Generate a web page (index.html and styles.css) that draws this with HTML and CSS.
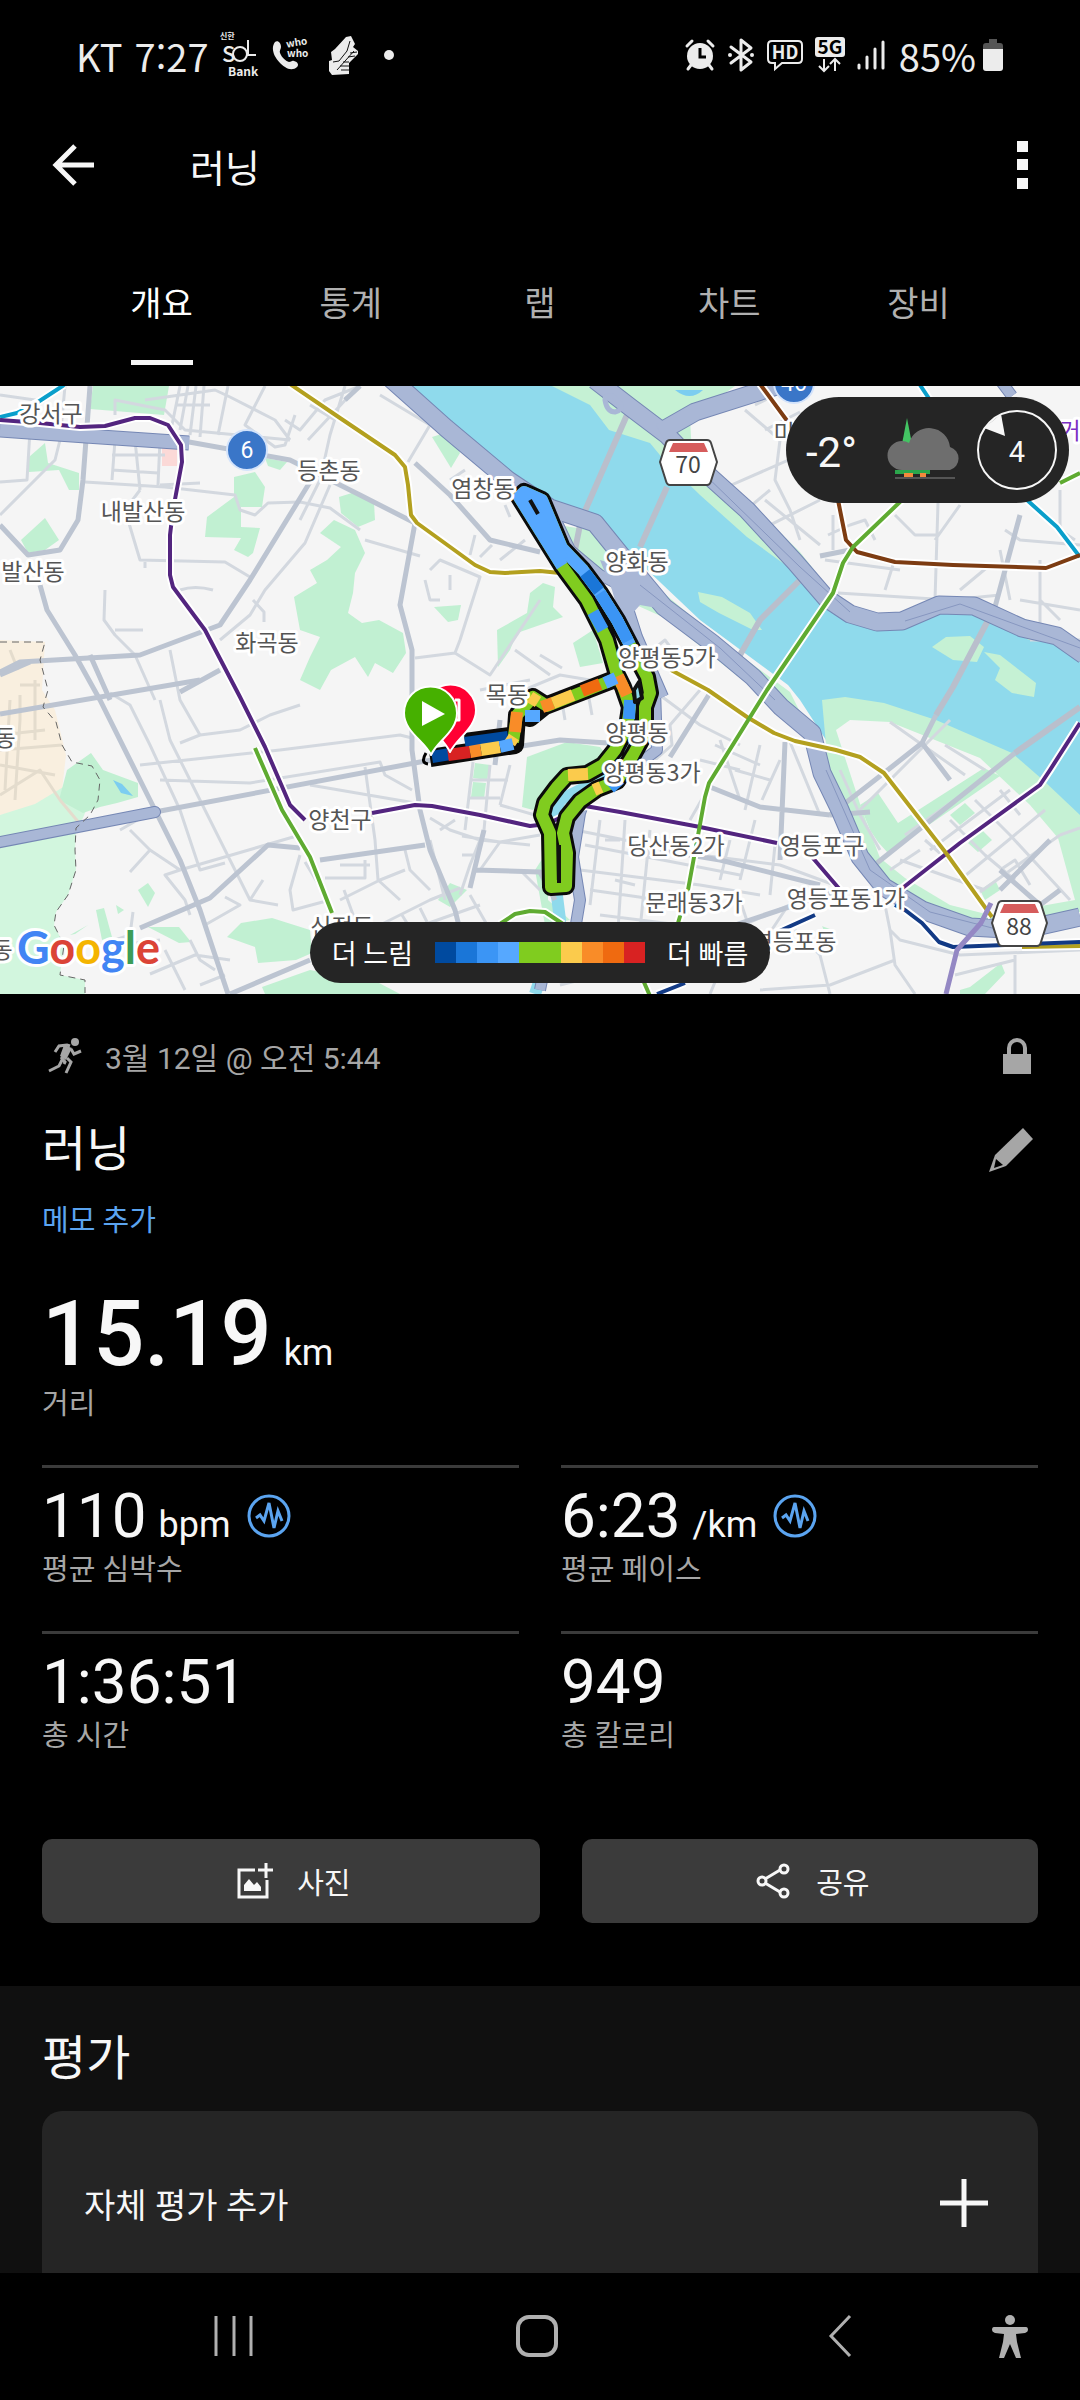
FILE: index.html
```html
<!DOCTYPE html>
<html lang="ko">
<head>
    <meta charset="UTF-8">
    <meta name="viewport" content="width=device-width, initial-scale=1">
    <title>러닝</title>
    <link rel="stylesheet" href="styles.css">
</head>

<body>

<div class="status-bar">
    <div class="status-left">
        <span class="carrier">KT</span>
        <span class="clock">7:27</span>
        <svg class="icon-sol" width="40" height="48" viewBox="0 0 40 48">
            <text x="0" y="8" font-size="8" font-weight="bold">신한</text>
            <text x="2" y="31" font-size="22" font-weight="500">S</text>
            <circle cx="20" cy="23" r="7" fill="none" stroke="#ececec" stroke-width="2"/>
            <path d="M28 9v15h8" fill="none" stroke="#ececec" stroke-width="2"/>
            <text x="8" y="45" font-size="12" font-weight="bold">Bank</text>
        </svg>
        <svg width="40" height="40" viewBox="0 0 40 40">
            <path d="M3 7C6 5 9 8 9 12c0 2-2 4-1 6 2 5 6 8 9 9 2 0 3-2 5-1 4 1 5 4 3 6-3 3-8 3-12 0C5 27-3 15 3 7z" fill="#ececec"/>
            <text x="15" y="13" font-size="10" font-weight="bold" transform="rotate(-10 14 14)">who</text>
            <text x="15" y="22" font-size="10" font-weight="bold">who</text>
        </svg>
        <svg class="icon-shoe" width="32" height="40" viewBox="0 0 32 40">
            <path d="M18 2l5-1 4 8-2 3 5 4v3l-9 9v11l-17 1-3-4V26l3-1-1-8 4-3z" fill="#ececec"/>
            <path d="M9 35l17-19M5 27l6-1 8-10 3-10M12 31h9M15 27h6M20 22l7-1M22 18l7-1M13 35h8" fill="none" stroke="#111" stroke-width="1"/>
        </svg>
        <span class="more-dot"></span>
    </div>
    <div class="status-right">
        <svg width="30" height="32" viewBox="0 0 30 32">
            <circle cx="15" cy="17" r="13" fill="#ececec"/>
            <path d="M2 7l5-5M28 7l-5-5M6 26l-3 4M24 26l3 4" stroke="#ececec" stroke-width="3" stroke-linecap="round"/>
            <path d="M15 9v9h6" fill="none" stroke="#000" stroke-width="3"/>
        </svg>
        <svg class="icon-bluetooth" width="28" height="34" viewBox="0 0 28 34">
            <path d="M4 9l20 15-10 8V2l10 8L4 25" fill="none" stroke="#ececec" stroke-width="3" stroke-linejoin="round" stroke-linecap="round"/>
            <circle cx="3" cy="17" r="2" fill="#ececec"/><circle cx="25" cy="17" r="2" fill="#ececec"/>
        </svg>
        <svg width="36" height="32" viewBox="0 0 36 32">
            <path d="M5 2h26q4 0 4 4v14q0 4-4 4H15l-7 6v-6H5q-4 0-4-4V6q0-4 4-4z" fill="none" stroke="#ececec" stroke-width="2"/>
            <text x="18" y="20" font-size="18" font-weight="bold" text-anchor="middle">HD</text>
        </svg>
        <svg width="30" height="36" viewBox="0 0 30 36">
            <rect width="30" height="20" rx="3" fill="#ececec"/>
            <text class="dark" x="15" y="17" font-size="19" font-weight="bold" text-anchor="middle">5G</text>
            <path d="M9 22v12M4 29l5 5 5-5M20 34V22M15 27l5-5 5 5" fill="none" stroke="#ececec" stroke-width="2"/>
        </svg>
        <svg class="icon-signal" width="28" height="30" viewBox="0 0 28 30">
            <path d="M2 25v3M10 17v11M18 9v19M26 2v26" stroke="#ececec" stroke-width="3" stroke-linecap="round"/>
        </svg>
        <span class="battery">85%</span>
        <svg width="22" height="34" viewBox="0 0 22 34">
            <path d="M7 1h8v4h3q3 0 3 3v4H1V8q0-3 3-3h3z" fill="#555"/>
            <path d="M1 11h20v19q0 3-3 3H4q-3 0-3-3z" fill="#ececec"/>
        </svg>
    </div>
</div>

<header class="app-bar">
    <button class="icon-button back" aria-label="뒤로">
        <svg width="42" height="42" viewBox="0 0 42 42">
            <path d="M23 2L4 21l19 19M4 21h38" fill="none" stroke="#f7f7f7" stroke-width="5"/>
        </svg>
    </button>
    <h1>러닝</h1>
    <button class="icon-button" aria-label="메뉴">
        <svg width="11" height="48" viewBox="0 0 11 48">
            <path d="M0 0h11v11H0zM0 18h11v11H0zM0 37h11v11H0z" fill="#f7f7f7"/>
        </svg>
    </button>
</header>

<nav class="tabs">
    <a class="tab active" href="#overview">개요</a>
    <a class="tab" href="#stats">통계</a>
    <a class="tab" href="#laps">랩</a>
    <a class="tab" href="#charts">차트</a>
    <a class="tab" href="#gear">장비</a>
</nav>

<div class="map">
    <svg class="map-canvas" viewBox="0 386 1080 608">
        <rect y="386" width="1080" height="608" fill="#f5f5f5"/>

        <!-- areas -->
        <path d="M0 640L45 642 42 690 55 710 66 755 62 790 20 812 0 815z" fill="#f9efdf"/>
        <path d="M0 815L35 804 65 786 90 800 83 818 76 828 75 850 76 870 68 895 56 912 54 925 64 945 60 975 85 980 85 994H0z" fill="#d2f6de"/>
        <path d="M162 446h15v20h-15z" fill="#fbd9d7"/>
        <path d="M1070 394h10v20h-18z" fill="#fbd9d7"/>
        <g fill="#c1f0d2">
            <path d="M93 386H169L164 415 90 409z"/>
            <path d="M234 477L255 472 265 487 262 507 241 507 241 527 260 528 253 553 248 557 234 550 241 538 205 537 207 517 234 497z"/>
            <path d="M339 497L355 492 374 503 375 520 358 527 341 513z"/>
            <path d="M320 533L334 520 355 530 365 553 355 573 353 593 348 613 362 623 379 620 403 633 406 653 393 673 375 663 368 677 355 657 331 670 320 690 300 680 310 657 320 637 300 630 294 597 317 583 310 570 327 560 341 547z"/>
            <path d="M21 540L45 518 59 540 45 550 28 553z"/>
            <path d="M29 457L45 443 48 463 79 473 79 490 69 490 59 470 29 472z"/>
            <path d="M432 437L448 432 460 453 451 468z"/>
            <path d="M265 458L287 462 280 470 268 466z"/>
            <path d="M434 607L461 605 458 620 448 622z"/>
            <path d="M497 630L527 613 530 593 543 583 555 587 553 607 563 617 517 633 510 650 498 667z"/>
            <path d="M573 643L593 630 603 663 580 667z"/>
            <path d="M67 770L91 753 103 770 138 783 138 797 117 803 100 807 83 813 59 800z"/>
            <path d="M227 937L241 923 272 918 310 930 312 953 296 960 258 963 255 947z"/>
            <path d="M262 987L310 970 379 983 400 994H265z"/>
            <path d="M138 890L148 883 155 893 148 907z"/>
            <path d="M148 927L179 927 191 942 179 943z"/>
            <path d="M96 910L104 908 112 937 102 940zM116 905L124 910 118 914zM70 935L88 925 75 934z"/>
            <path d="M527 757L567 742 600 747 610 760 570 775 557 790 533 810 522 807z"/>
            <path d="M475 763L490 765 487 780 473 778zM473 782L486 783 484 799 471 797z"/>
            <path d="M450 883L467 890 450 907 438 900z"/>
            <path d="M535 870L548 850 548 900 570 920 545 925z"/>
            <path d="M819 917L840 912 840 927 826 937z"/>
            <path d="M960 990L970 987 1001 963 1005 973 985 994H960z"/>
            <path d="M972 530L976 517 995 505 1012 513 991 530 974 538z"/>
        </g>
        <path d="M113 780L122 784 133 796 121 793z" fill="#7ccdf0"/>

        <!-- river -->
        <path d="M400 386H1080V830L1030 850 900 800 826 740 800 700 788 685 700 620 623 547 590 520 545 504 516 477 451 430z" fill="#8fdaec"/>
        <path d="M552 386L590 405 609 430 650 443 664 460 700 495 747 537 802 577 829 607 850 620 877 628 898 627 939 610 974 612 1029 640 1056 642 1080 657V386z" fill="#c5f1d4"/>
        <path d="M735 386L690 418 692 455 747 500 800 552 830 590 855 607 877 615 900 616 939 598 974 600 1080 640V386z" fill="#f5f5f5"/>
        <path d="M675 390q15 12 28 0z" fill="#7ccdf0"/>
        <path d="M623 570L660 590 720 640 790 692 800 712 770 710 640 610z" fill="#c5f1d4"/>
        <path d="M558 525L590 530 612 556 625 575 590 570 565 550z" fill="#c5f1d4"/>
        <path d="M625 600L665 618 755 690 800 740 815 800 860 880 920 930 860 940 640 860 620 700z" fill="#f5f5f5"/>
        <g fill="#c5f1d4">
            <path d="M698 592L722 597 750 613 762 630 753 630 719 613 700 602z"/>
            <path d="M932 647L946 637 970 636 984 647 977 662 953 660z"/>
            <path d="M984 652L1000 655 1036 683 1034 697 1012 693 995 680 1000 668z"/>
            <path d="M822 700L845 697 884 703 936 720 1012 753 1043 780 1080 815V912L1040 922H960L900 900 862 850 830 790z"/>
        </g>
        <path d="M836 730L850 720 890 722 980 758 1030 805 1058 838 1075 900 990 915 950 905 905 878 880 858 862 810z" fill="#f5f5f5"/>
        <g fill="#c1f0d2">
            <path d="M860 805L878 793 898 823 984 768 1000 776 888 853 878 842 870 830z"/>
            <path d="M950 815L965 803 975 813 960 825zM968 843L982 830 992 840 978 852zM980 890L995 880 1000 890 985 900z"/>
        </g>

        <!-- stream -->
        <path d="M642 690L640 720 625 755 590 785 560 800 550 830 555 880 560 920 535 994" fill="none" stroke="#8fdaec" stroke-width="12"/>

        <!-- minor streets -->
        <g class="street">
            <path d="M0 395L35 400 33 420M65 386L60 440M30 430L27 480 0 482M60 440L55 460 0 515M115 440L112 480M135 440L140 490M160 440L158 485M112 455H165M112 470L158 473M85 482L165 487 235 495 240 510 255 515 268 503 300 502 330 508 360 530M115 415V400L165 410 185 430 290 440M180 386L172 425M188 386L180 430M196 386L190 435M204 386L200 437M145 400L215 390 230 397 275 420 290 440M265 386L245 425 275 447 285 445 295 415M228 386L218 435M175 405H210"/>
            <path d="M140 490L125 510 140 560 225 562 250 577M160 485L200 483M145 562V568M180 590Q195 585 213 590M105 590L104 620 115 635 135 655 155 700M115 630H143M253 600L264 612V622M360 386L325 400 300 430 285 420M380 395L430 425 408 462M345 386L330 435 320 480 300 520M330 485L305 543 265 590 250 615 220 640M365 540L420 556M350 395L308 440M335 420L310 405"/>
            <path d="M430 570L440 560 480 577 460 640 455 653 415 658M455 653L490 675 540 600M425 580L430 600 440 600M450 575V590M470 555L475 535M480 557L492 545M500 560L525 540M465 470L450 480M505 505L510 517M515 650L550 675M540 655L562 668"/>
            <path d="M170 650L180 700 200 735 240 730 270 715 300 705M200 735L180 743M140 765L280 750 400 735 412 738M110 693L130 705 150 745 180 810 200 870 225 863M160 780L250 783 380 762 385 775 412 790M160 700L170 740 195 790 225 850 250 900 278 905M180 870L300 835M130 830L150 850 180 870 165 875 185 900 190 915M150 850L130 872M250 900L263 880M300 855L290 890 293 910 330 900M305 862L325 895M365 767L375 840 378 880 400 900M310 785L415 803M340 865H370M325 878H365V860M405 850L410 870 430 890M430 840L445 900M340 900L380 880 405 870M344 890L355 920M120 830L155 810"/>
            <path d="M150 974L195 955 230 960M165 950L185 990M190 940L200 960 215 970M200 985L225 975M120 945L160 940M205 925L240 905 225 897M100 945L130 935 133 912"/>
            <path d="M473 762L465 830M490 765L484 830 470 865 460 895M510 765L500 805M470 780H508M470 798H500M462 836L500 842 480 870M462 855H478M500 805L535 815M430 818L450 830 480 840 530 845M440 830L455 820M500 842L540 835M380 925L430 900 460 888M395 935L480 905M402 915L410 928M420 908L427 922M470 895L490 930M520 870L540 890"/>
            <path d="M560 690L565 720M588 693L592 715M480 690L530 680M500 700L560 675 590 680M640 660L665 640 680 660M653 690L700 725 740 745M700 690L670 725 672 745 655 760M720 740L740 800M760 745L745 810M790 742L820 815M730 750L690 820M700 760L740 770M715 745L760 765M735 770L770 780M780 760L762 800"/>
            <path d="M575 830L700 855 780 865 840 887M585 845L740 875M580 870L700 885 760 895M600 820L590 905M625 820L618 930M650 830L640 930M730 840L720 880M755 820L740 880M775 845L770 895M590 890L660 900M600 915L680 925M605 840H620M640 850L655 855M615 880L635 885M740 900L750 930M720 935L790 905M765 940L785 910M885 905L890 930 900 940 960 955 1080 950M890 930L895 965 915 994M895 960L830 985 760 990M795 930L820 955 830 994M560 985L620 970M1015 955V994M955 975L1015 960M700 945L720 970 710 994"/>
            <path d="M860 810L950 720M890 722L965 775M945 745L985 770M905 835L990 775M930 850L1010 790M960 880L1045 810M980 892L1060 835M900 860L985 890M925 840L950 862M950 820L985 855 1015 880M975 800L1010 835 1070 900M890 870L920 850M1000 790L1020 815M1060 835L1080 828M1000 870L1015 860 1030 885M840 770L860 815 880 850"/>
            <path d="M745 410L780 440 775 480 790 510 800 540M720 490L800 455M752 505L770 490M760 530L820 500M755 405L775 395M765 430L800 412M747 520L800 570M700 475L720 488M765 500L820 545M825 560L900 570M828 535L850 525 865 520 875 540M833 515V550M838 593L950 600 1000 595M938 503L935 600M895 515L915 535H938M893 565L885 590M960 505L935 540M1005 530L1020 540 1080 545M1040 560V635M1000 550L1010 600M1060 490V530L1075 540M1020 600L1080 610M960 590L990 565M1040 600L1060 620M1030 640L1080 640"/>
            <path d="M20 695V720M35 680V740M0 735L45 730M0 750L62 745M10 700L5 790M20 720L15 800M0 765L55 775M0 795L40 770 60 800M60 800L85 830M10 650L18 670M20 685H40" stroke="#e4dccd"/>
        </g>

        <!-- main streets -->
        <g class="road">
            <path d="M90 386L83 480 78 520 60 550 28 555 0 525M40 585L47 610 75 655 100 700 140 780 180 860 200 910 228 994"/>
            <path d="M189 442L290 460 360 495 415 523 400 605 412 650 412 750 420 810 430 850 455 910 460 930M310 482L250 580 220 625 140 655 20 662 0 672M360 386L345 400"/>
            <path d="M415 463L450 495 490 540 540 552M0 714L200 680M155 812L420 762 560 740 640 745M140 928L210 898 268 845 300 848M230 994L310 960M320 860L425 845M0 675L30 662"/>
            <path d="M90 655L110 700M180 692L220 670"/>
            <path d="M710 693L670 757M710 787L760 807 830 815M830 815L875 780 922 743 936 715M660 850L720 860 820 885M785 742L780 860M1015 753L877 863M922 743L950 780M830 815L870 812M1000 870L1040 905 1060 890M1050 840L1000 890M820 556L850 550M1020 515L995 607M720 930L840 890"/>
            <path d="M484 830L470 888M495 765L500 720M475 870L540 872 555 900"/>
        </g>
        <path d="M630 408L581 520 575 550M667 487L640 547M802 578L760 620 740 655M995 607L953 687 936 715M1080 707L1015 753" fill="none" stroke="#b9bfcc" stroke-width="6"/>

        <!-- expressways -->
        <g class="expressway-edge">
            <path d="M390 378L446 428 508 480 550 508 595 523 625 560 664 607 712 643 753 677 781 707 812 733 822 773 840 810 860 857 884 887 922 910 970 927 1022 930 1080 917"/>
            <path d="M595 380L630 407 667 435 688 457 747 510 795 562 826 598 850 614 877 622 902 621 939 605 974 606 1022 628 1057 636 1084 655"/>
            <path d="M660 432L695 412 764 390 795 380"/>
            <path d="M0 430L86 436 145 440 189 443" stroke-width="15"/>
            <path d="M550 508L570 550 600 575 630 590M655 690L657 750 617 780 587 793 580 813 573 857 580 900 575 930M622 590L637 637 663 697M540 990L550 940M1000 380L1012 396" stroke-width="12"/>
            <path d="M-5 843L155 812" stroke-width="12" stroke-linecap="round"/>
        </g>
        <g class="expressway">
            <path d="M390 378L446 428 508 480 550 508 595 523 625 560 664 607 712 643 753 677 781 707 812 733 822 773 840 810 860 857 884 887 922 910 970 927 1022 930 1080 917"/>
            <path d="M595 380L630 407 667 435 688 457 747 510 795 562 826 598 850 614 877 622 902 621 939 605 974 606 1022 628 1057 636 1084 655"/>
            <path d="M660 432L695 412 764 390 795 380"/>
            <path d="M0 430L86 436 145 440 189 443" stroke-width="13"/>
            <path d="M550 508L570 550 600 575 630 590M655 690L657 750 617 780 587 793 580 813 573 857 580 900 575 930M622 590L637 637 663 697M540 990L550 940M1000 380L1012 396" stroke-width="10"/>
            <path d="M-5 843L155 812" stroke-width="10" stroke-linecap="round"/>
        </g>
        <path d="M600 560L640 572 668 610 640 605 622 625 612 590z" fill="#a9b7d6"/>
        <path d="M605 400q0-6 8-4l8 8q2 6-6 8-8 0-10-12z" fill="none" stroke="#a9b7d6" stroke-width="5"/>
        <path d="M700 470L800 567 850 612M640 585L720 648 775 700M826 770L870 870 930 912 1000 930M905 621L960 604 1020 626 1080 648" fill="none" stroke="#8797c0" stroke-width="1"/>

        <path d="M0 642H45L40 660 48 690 43 707 56 722 62 745 72 762 92 766 100 780 98 800 90 815 76 828 75 850 76 870 68 895 56 912 54 925 64 945 60 975 85 980 85 993" fill="none" stroke="#666" stroke-width="1" stroke-dasharray="7 5"/>

        <!-- metro lines, white casing below the colour -->
        <g class="metro-casing">
            <path d="M0 420L40 423 80 427 105 426 135 418 150 418 168 425 181 445 182 462 173 510 170 535 170 575 173 587 205 630 240 697 265 747 290 805 305 820M372 813L415 805 432 806 480 815 530 826 547 824 585 806 620 812 700 827 777 843M812 857L842 892M900 890L960 843 1040 785 1050 770 1080 723"/>
            <path d="M290 384L340 418 395 455 405 467 408 485 411 515 417 523 475 565 490 572 505 573 540 571 560 573M671 670L708 690 747 717 774 733 795 741 836 750 860 757 884 773 946 853 992 917M1022 947L1080 946"/>
            <path d="M902 500L853 547 843 563 833 593 767 690 709 783 705 797 688 890 678 923M643 980L650 996M1060 483L1080 473M255 748L282 810 310 857 332 913M500 924L515 914 530 911 545 912 563 924"/>
            <path d="M760 384L788 422M838 500L846 540 857 552 895 562 953 565 1046 568 1080 555"/>
            <path d="M0 417L17 413 38 402 64 385M920 385L930 400M1027 500L1057 527 1080 557"/>
            <path d="M657 994L685 983M775 933L815 915M895 905L905 910 922 923 939 942 953 947 1080 942"/>
        </g>
        <g class="metro">
            <path stroke="#0a9fcb" d="M0 417L17 413 38 402 64 385M920 385L930 400M1027 500L1057 527 1080 557"/>
            <path stroke="#53257f" d="M0 420L40 423 80 427 105 426 135 418 150 418 168 425 181 445 182 462 173 510 170 535 170 575 173 587 205 630 240 697 265 747 290 805 305 820M372 813L415 805 432 806 480 815 530 826 547 824 585 806 620 812 700 827 777 843M812 857L842 892M900 890L960 843 1040 785 1050 770 1080 723"/>
            <path stroke="#b3a01f" d="M290 384L340 418 395 455 405 467 408 485 411 515 417 523 475 565 490 572 505 573 540 571 560 573M671 670L708 690 747 717 774 733 795 741 836 750 860 757 884 773 946 853 992 917M1022 947L1080 946"/>
            <path stroke="#7d3c12" d="M760 384L788 422M838 500L846 540 857 552 895 562 953 565 1046 568 1080 555"/>
            <path stroke="#5fab31" d="M902 500L853 547 843 563 833 593 767 690 709 783 705 797 688 890 678 923M643 980L650 996M1060 483L1080 473M255 748L282 810 310 857 332 913M500 924L515 914 530 911 545 912 563 924"/>
            <path stroke="#123a85" d="M657 994L685 983M775 933L815 915M895 905L905 910 922 923 939 942 953 947 1080 942"/>
            <path stroke="#9488c4" stroke-width="5" d="M991 903L981 923 957 950 946 994"/>
        </g>

        <!-- recorded track -->
        <g class="track-outline">
            <path d="M430 758L515 745 517 715 530 718 545 706 620 677"/>
            <path d="M465 742L510 736M517 715L533 697 547 706" />
            <path d="M617 675L607 640 587 600 562 566 519 497 524 492 542 500 562 548 583 570 600 593 617 620 630 645 647 677 650 693 645 707 645 733 633 755 617 781 597 789 580 801 567 817 563 833 567 853 566 886 551 887 550 833 542 815 545 803 557 787 567 776 587 774 603 765 615 750 627 727 630 707 623 687z"/>
        </g>
        <g class="track" stroke="#80cc1f">
            <path d="M617 675L607 640 587 600 562 566 519 497 524 492 542 500 562 548 583 570 600 593 617 620 630 645 647 677 650 693 645 707 645 733 633 755 617 781 597 789 580 801 567 817 563 833 567 853 566 886 551 887 550 833 542 815 545 803 557 787 567 776 587 774 603 765 615 750 627 727 630 707 623 687z"/>
            <path d="M513 742L517 715 533 697 547 706 620 677"/>
            <path stroke="#56a8ff" d="M562 566L519 497 524 492 542 500 562 548 583 570 600 593 617 620 630 645"/>
            <path stroke="#56a8ff" stroke-width="14" d="M527 500L562 560"/>
            <path stroke="#1a76d8" d="M585 573L599 591"/>
            <path stroke="#3b95f5" d="M600 593L617 620 628 641M593 612L603 630M630 700L629 719M610 788L620 779"/>
            <path stroke="#fbcb4c" d="M568 775L588 774M594 790L601 787"/>
            <path stroke="#f98c28" d="M618 676L627 695"/>
            <path stroke="#004a9f" d="M432 757L450 754M465 743L508 737"/>
            <path stroke="#d82222" d="M448 755L470 752"/>
            <path stroke="#f98c28" d="M470 752L481 750M515 732L517 712M542 707L553 703"/>
            <path stroke="#fbcb4c" d="M481 750L500 747M553 703L573 695M530 697L538 702M510 743L514 737"/>
            <path stroke="#56a8ff" d="M500 747L513 744M525 716L540 716M605 683L616 678"/>
            <path stroke="#ef6a10" d="M582 691L600 684"/>
        </g>
        <path d="M530 500l8 14M559 845v38" fill="none" stroke="#111" stroke-width="4"/>
        <path d="M634 690l5-8 3 16-7 4z" fill="#8fdaec" stroke="#111" stroke-width="4"/>
        <path d="M426 753q-6 10 2 11" fill="none" stroke="#000" stroke-width="3"/>
        <path d="M450 752C444 738 425 728 425 710a25 25 0 0 1 51 0C476 728 457 738 450 752z" fill="#ff0033" stroke="#fff" stroke-width="2"/>
        <path d="M455 700h4v20h-6" fill="none" stroke="#fff" stroke-width="3"/>
        <path d="M431 755C425 741 404 732 404 713a26 26 0 0 1 53 0C457 732 437 741 431 755z" fill="#46b000" stroke="#fff" stroke-width="2"/>
        <path d="M422 701v25l23-12z" fill="#fff"/>

        <!-- place names -->
        <g class="place">
            <text x="51" y="422">강서구</text>
            <text x="329" y="479">등촌동</text>
            <text x="143" y="520">내발산동</text>
            <text x="33" y="580">발산동</text>
            <text x="267" y="651">화곡동</text>
            <text x="483" y="497">염창동</text>
            <text x="637" y="570">양화동</text>
            <text x="667" y="666">양평동5가</text>
            <text x="637" y="741">양평동</text>
            <text x="652" y="781">양평동3가</text>
            <text x="507" y="703">목동</text>
            <text x="340" y="828">양천구</text>
            <text x="5" y="746">동</text>
            <text x="2" y="958">동</text>
            <text x="676" y="854">당산동2가</text>
            <text x="822" y="854">영등포구</text>
            <text x="694" y="911">문래동3가</text>
            <text x="846" y="907">영등포동1가</text>
            <text x="794" y="950">영등포동</text>
            <text x="342" y="935">신정동</text>
            <text x="784" y="441">미</text>
            <text class="station" x="1070" y="439">거</text>
        </g>

        <!-- road numbers -->
        <g class="route-number">
            <circle cx="247" cy="450" r="20"/>
            <text x="247" y="458">6</text>
            <circle cx="794" cy="383" r="20"/>
            <text x="794" y="391">46</text>
        </g>
        <g class="shield">
            <path d="M670 440h37q3 0 4 3l6 19-6 19q-1 4-4 4h-37q-3 0-4-4l-6-19 6-19q1-3 4-3z"/>
            <path class="shield-top" d="M673 443h31l4 9h-39z"/>
            <text x="688" y="473">70</text>
            <path d="M1002 901h35q3 0 4 3l6 19-6 19q-1 4-4 4h-35q-3 0-4-4l-6-19 6-19q1-3 4-3z"/>
            <path class="shield-top" d="M1004 904h31l4 9h-39z"/>
            <text x="1019" y="935">88</text>
        </g>

        <text class="map-logo" x="17" y="964"><tspan fill="#4285f4">G</tspan><tspan fill="#db4437">o</tspan><tspan fill="#f4b400">o</tspan><tspan fill="#4285f4">g</tspan><tspan fill="#3c9d58">l</tspan><tspan fill="#db4437">e</tspan></text>
    </svg>

    <div class="weather">
        <span class="temperature">-2°</span>
        <svg width="76" height="64" viewBox="0 0 76 64">
            <path d="M20 0l5 26h-10z" fill="#43c463"/>
            <path d="M15 52a14 14 0 0 1 0-29q4 0 7 2A21 21 0 0 1 63 29a12 12 0 0 1 0 23z" fill="#6e6e6e"/>
            <path d="M8 52h35v4H8z" fill="#2ba64c"/>
            <path d="M17 55h9v4h-9zM33 55h6v4h-6z" fill="#f28a3c"/>
            <path d="M8 60h60" stroke="#555" stroke-width="2"/>
        </svg>
        <svg width="84" height="84" viewBox="0 0 84 84">
            <circle cx="42" cy="42" r="39" fill="none" stroke="#f7f7f7" stroke-width="2"/>
            <path d="M9 20L26 6l4 22z" fill="#f7f7f7"/>
            <text x="42" y="54" font-size="29" text-anchor="middle">4</text>
        </svg>
    </div>

    <div class="legend">
        <span>더 느림</span>
        <div class="scale">
            <i class="slow-4"></i><i class="slow-3"></i><i class="slow-2"></i><i class="slow-1"></i><i class="mid"></i><i class="mid"></i><i class="fast-1"></i><i class="fast-2"></i><i class="fast-3"></i><i class="fast-4"></i>
        </div>
        <span>더 빠름</span>
    </div>
</div>

<main class="details">
    <div class="meta-row">
        <svg width="36" height="36" viewBox="0 0 36 36">
            <circle cx="28" cy="4" r="4" fill="#a6a6a6"/>
            <path d="M8 14l4-6 8-1 3 1M14 19l4 5-1 2M20 20l4 4-5 11M15 22l-3 6-10 5M24 11l3 5 7-3" fill="none" stroke="#a6a6a6" stroke-width="3"/>
            <path d="M17 7l8 3-6 12-6-4z" fill="#a6a6a6"/>
        </svg>
        <time>3월 12일 @ 오전 5:44</time>
        <svg class="lock" width="28" height="36" viewBox="0 0 28 36">
            <path d="M6 18V10a8 8 0 0 1 16 0v8" fill="none" stroke="#a6a6a6" stroke-width="4"/>
            <path d="M0 16h28v20H0z" fill="#a6a6a6"/>
        </svg>
    </div>
    <div class="title-row">
        <h2>러닝</h2>
        <button class="icon-button" aria-label="편집">
            <svg width="46" height="46" viewBox="0 0 46 46">
                <path d="M35 1l10 11-27 27-17 6 6-17z" fill="#a6a6a6"/>
                <path d="M8 32l7 6-9 3z" fill="#000"/>
            </svg>
        </button>
    </div>
    <a class="memo" href="#memo">메모 추가</a>

    <div class="distance">
        <div class="value">15.19 <span class="unit">km</span></div>
        <div class="label">거리</div>
    </div>

    <div class="stats">
        <div class="stat">
            <div class="value">110 <span class="unit">bpm</span>
                <svg width="44" height="44" viewBox="0 0 44 44"><circle cx="22" cy="22" r="20"/><path d="M9 24l4-3 4 6 5-18 5 25 4-17 4 10"/></svg>
            </div>
            <div class="label">평균 심박수</div>
        </div>
        <div class="stat">
            <div class="value">6:23 <span class="unit">/km</span>
                <svg width="44" height="44" viewBox="0 0 44 44"><circle cx="22" cy="22" r="20"/><path d="M9 24l4-3 4 6 5-18 5 25 4-17 4 10"/></svg>
            </div>
            <div class="label">평균 페이스</div>
        </div>
        <div class="stat">
            <div class="value">1:36:51</div>
            <div class="label">총 시간</div>
        </div>
        <div class="stat">
            <div class="value">949</div>
            <div class="label">총 칼로리</div>
        </div>
    </div>

    <div class="actions">
        <button class="action">
            <svg width="36" height="36" viewBox="0 0 36 36">
                <path d="M18 7H2v27h28V17M29 0v15M21 7h15" fill="none" stroke="#f7f7f7" stroke-width="3"/>
                <path d="M7 28V22l5-6 5 6 3-3 4 5v4z" fill="#f7f7f7"/>
            </svg>
            사진
        </button>
        <button class="action">
            <svg width="36" height="36" viewBox="0 0 36 36">
                <path d="M9 16L24 7M9 20l15 9" stroke="#f7f7f7" stroke-width="3"/>
                <g fill="none" stroke="#f7f7f7" stroke-width="3"><circle cx="6" cy="18" r="4"/><circle cx="28" cy="6" r="4"/><circle cx="28" cy="30" r="4"/></g>
            </svg>
            공유
        </button>
    </div>
</main>

<section class="evaluation">
    <h2>평가</h2>
    <button class="evaluation-card">
        자체 평가 추가
        <svg width="48" height="48" viewBox="0 0 48 48"><path d="M24 0v48M0 24h48" stroke="#f7f7f7" stroke-width="5"/></svg>
    </button>
</section>

<nav class="system-nav">
    <button class="icon-button" aria-label="최근 앱">
        <svg width="42" height="42" viewBox="0 0 42 42"><path d="M3 1v40M21 1v40M38 1v40" stroke="#b0b0b0" stroke-width="3"/></svg>
    </button>
    <button class="icon-button" aria-label="홈">
        <svg width="42" height="42" viewBox="0 0 42 42"><rect x="2" y="2" width="38" height="38" rx="11" fill="none" stroke="#b0b0b0" stroke-width="4"/></svg>
    </button>
    <button class="icon-button" aria-label="뒤로 가기">
        <svg width="24" height="42" viewBox="0 0 24 42"><path d="M22 1L3 21l19 20" fill="none" stroke="#b0b0b0" stroke-width="3"/></svg>
    </button>
    <button class="icon-button" aria-label="접근성">
        <svg width="38" height="44" viewBox="0 0 38 44">
            <circle cx="19" cy="6" r="5" fill="#b0b0b0"/>
            <path d="M3 13h32q2 0 2 3 0 2-3 3l-9 1 1 8 4 16h-5l-6-14-6 14H8l4-16 1-8-9-1q-3-1-3-3 0-3 2-3z" fill="#b0b0b0"/>
        </svg>
    </button>
</nav>

</body>
</html>
```
FILE: styles.css
```css
:root {
    --text: #f7f7f7;
    --text-muted: #a6a6a6;
    --link: #5ba4f0;
    --surface: #252525;
    --line: #3b3b3b;
    --gutter: 42px;
}

* {
    box-sizing: border-box;
}

body {
    margin: 0;
    background-color: #000000;
    color: var(--text);
    font-family: Roboto, "Noto Sans CJK KR", sans-serif;
    font-size: 29px;
}

h1, h2 {
    margin: 0;
    font-weight: 400;
}

svg {
    display: block;
    flex: none;
    overflow: visible;
}

button {
    padding: 0;
    border: 0;
    background: none;
    color: inherit;
    font: inherit;
}

a {
    color: inherit;
    text-decoration: none;
}

/* status bar */
.status-bar {
    display: flex;
    justify-content: space-between;
    height: 110px;
    padding: 0 76px;
    font-family: "Noto Sans CJK KR", sans-serif;
    font-size: 38px;
    color: #ececec;
}
.status-bar text {
    fill: #ececec;
    font-family: "Noto Sans CJK KR", sans-serif;
}
.status-bar .dark {
    fill: #000000;
}
.status-left, .status-right {
    display: flex;
    align-items: center;
}
.status-left {
    gap: 12px;
}
.status-right {
    gap: 12px;
}
.status-left .icon-shoe {
    margin-left: 4px;
}
.icon-signal {
    margin-right: 2px;
}
.battery {
    margin-right: -6px;
}
.more-dot {
    width: 10px;
    height: 10px;
    margin-left: 12px;
    border-radius: 50%;
    background-color: #ececec;
}

/* app bar */
.app-bar {
    display: flex;
    align-items: center;
    height: 110px;
    padding: 0 52px;
}
.app-bar h1 {
    flex: 1;
    margin-left: 96px;
    font-size: 38px;
}

/* tabs */
.tabs {
    display: flex;
    height: 166px;
    padding: 0 67px;
    font-size: 34px;
    color: #b0b0b0;
}
.tab {
    flex: 1;
    display: flex;
    flex-direction: column;
    align-items: center;
    justify-content: center;
    padding-bottom: 3px;
}
.tab.active {
    color: #ffffff;
    position: relative;
}
.tab.active:after {
    content: "";
    position: absolute;
    bottom: 21px;
    width: 62px;
    height: 5px;
    background-color: var(--text);
}

/* map */
.map {
    position: relative;
}
.map-canvas {
    width: 100%;
    height: auto;
    overflow: hidden;
}
.map-canvas path {
    stroke-linejoin: round;
}
.street {
    fill: none;
    stroke: #d3d8df;
    stroke-width: 3;
}
.road {
    fill: none;
    stroke: #bcc4d1;
    stroke-width: 5;
}
.expressway-edge {
    fill: none;
    stroke: #7587b4;
    stroke-width: 19;
}
.expressway {
    fill: none;
    stroke: #a9b7d6;
    stroke-width: 17;
}
.metro-casing {
    fill: none;
    stroke: #ffffff;
    stroke-width: 8;
}
.metro {
    fill: none;
    stroke-width: 4;
}
.track-outline {
    fill: none;
    stroke: #0b0b0b;
    stroke-width: 18;
}
.track {
    fill: none;
    stroke-width: 12;
}
.place text {
    fill: #555555;
    stroke: #ffffff;
    stroke-width: 6;
    stroke-linejoin: round;
    paint-order: stroke;
    font-family: "Noto Sans CJK KR", sans-serif;
    font-size: 23px;
    text-anchor: middle;
}
.place .station {
    fill: #7b2fc4;
}
.route-number circle {
    fill: #3a76c8;
    stroke: #d3e3fb;
    stroke-width: 2;
}
.route-number text {
    fill: #ffffff;
    font-size: 23px;
    text-anchor: middle;
}
.shield path {
    fill: #ffffff;
    stroke: #444444;
    stroke-width: 2;
}
.shield .shield-top {
    fill: #d65c5c;
    stroke: none;
}
.shield text {
    fill: #444444;
    font-family: "Noto Sans CJK KR", sans-serif;
    font-size: 23px;
    text-anchor: middle;
}
.map-logo {
    stroke: #ffffff;
    stroke-width: 6;
    stroke-linejoin: round;
    paint-order: stroke;
    font-family: Lato, sans-serif;
    font-size: 45px;
    font-weight: 700;
}

.weather {
    position: absolute;
    top: 11px;
    right: 11px;
    display: flex;
    align-items: center;
    gap: 12px;
    width: 283px;
    height: 106px;
    padding: 0 10px 0 20px;
    border-radius: 53px;
    background-color: var(--surface);
    font-size: 42px;
}
.temperature {
    flex: 1;
    padding-top: 4px;
}
.weather text {
    fill: var(--text);
}
.legend {
    position: absolute;
    bottom: 11px;
    left: 0;
    right: 0;
    display: flex;
    align-items: center;
    gap: 22px;
    width: max-content;
    height: 61px;
    margin: 0 auto;
    padding: 0 22px;
    border-radius: 31px;
    background-color: var(--surface);
    font-size: 27px;
    color: #ffffff;
}
.scale {
    display: flex;
}
.scale i {
    width: 21px;
    height: 21px;
}
.slow-4 { background-color: #004a9f; }
.slow-3 { background-color: #1a76d8; }
.slow-2 { background-color: #3b95f5; }
.slow-1 { background-color: #56a8ff; }
.mid { background-color: #80cc1f; }
.fast-1 { background-color: #fbcb4c; }
.fast-2 { background-color: #f98c28; }
.fast-3 { background-color: #ef6a10; }
.fast-4 { background-color: #d82222; }

/* activity details */
.details {
    padding: 38px var(--gutter) 63px;
}
.meta-row {
    display: flex;
    align-items: center;
    gap: 22px;
    height: 48px;
    padding-left: 5px;
    font-size: 30px;
    color: var(--text-muted);
}
.meta-row .lock {
    margin: 0 7px 0 auto;
}
.title-row {
    display: flex;
    align-items: center;
    justify-content: space-between;
    height: 72px;
    margin-top: 34px;
    padding-right: 4px;
    font-size: 48px;
}
.title-row h2, .evaluation h2 {
    font-size: 48px;
    line-height: 72px;
}
.memo {
    display: block;
    margin-top: 13px;
    line-height: 44px;
    color: var(--link);
}
.value {
    display: flex;
    align-items: baseline;
    line-height: 72px;
    font-size: 62px;
}
.unit {
    margin-left: 12px;
    font-size: 36px;
    line-height: 36px;
}
.label {
    line-height: 36px;
    color: var(--text-muted);
}
.distance {
    margin-top: 41px;
}
.distance .value {
    line-height: 102px;
    font-size: 90px;
    font-weight: 500;
}
.distance .unit {
    font-weight: 400;
}
.stats {
    display: grid;
    grid-template-columns: 1fr 1fr;
    column-gap: var(--gutter);
    margin-top: 43px;
}
.stat {
    height: 166px;
    padding-top: 12px;
    border-top: 3px solid var(--line);
}
.stat svg {
    align-self: center;
    margin-left: 16px;
    fill: none;
    stroke: var(--link);
    stroke-width: 3;
}
.actions {
    display: flex;
    gap: var(--gutter);
    margin-top: 42px;
}
.action {
    display: flex;
    flex: 456;
    align-items: center;
    justify-content: center;
    gap: 24px;
    height: 84px;
    padding-left: 6px;
    border-radius: 10px;
    background-color: var(--line);
}
.action:first-child {
    flex: 498;
}

/* evaluation */
.evaluation {
    padding: 37px var(--gutter) 0;
    background-color: #101010;
}
.evaluation-card {
    display: flex;
    align-items: center;
    justify-content: space-between;
    width: 100%;
    height: 162px;
    margin-top: 16px;
    padding: 22px 50px 0 42px;
    border-radius: 20px 20px 0 0;
    background-color: var(--surface);
    font-size: 34px;
}

/* system navigation */
.system-nav {
    display: grid;
    grid-template-columns: 1fr 1fr 1fr 38px;
    align-items: center;
    justify-items: center;
    height: 126px;
    padding: 0 51px 0 82px;
}
```
